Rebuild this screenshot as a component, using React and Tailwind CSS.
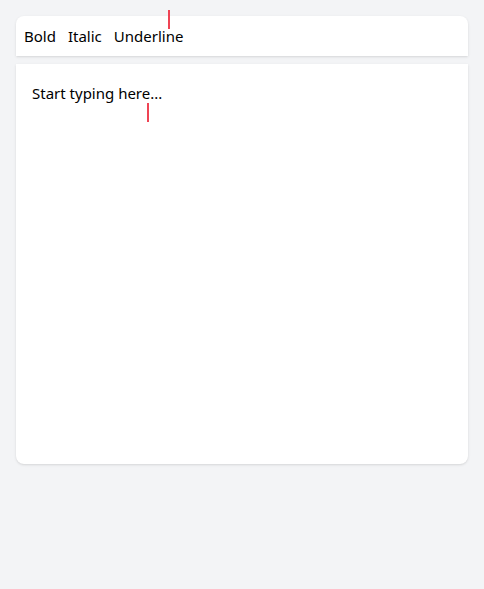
export default function App() {
  return (
    <div className="relative min-h-screen bg-gray-100 p-4 text-black" style={{ fontFamily: '"Noto Sans", "Open Sans", sans-serif' }}>
      <div className="flex gap-3 rounded-t-lg bg-white p-2 text-[15px] leading-6 shadow-sm">
        <button className="cursor-pointer">Bold</button>
        <button className="cursor-pointer">Italic</button>
        <button className="cursor-pointer">Underline</button>
      </div>
      <div className="mt-2 h-[400px] rounded-b-lg bg-white p-4 text-[15px] leading-6 shadow-sm">
        <p className="pt-px">Start typing here...</p>
      </div>
      <div className="absolute left-[168px] top-[10px] h-[19px] w-[2px] bg-[#ef4454]" />
      <div className="absolute left-[147px] top-[103px] h-[19px] w-[2px] bg-[#ef4454]" />
    </div>
  );
}
